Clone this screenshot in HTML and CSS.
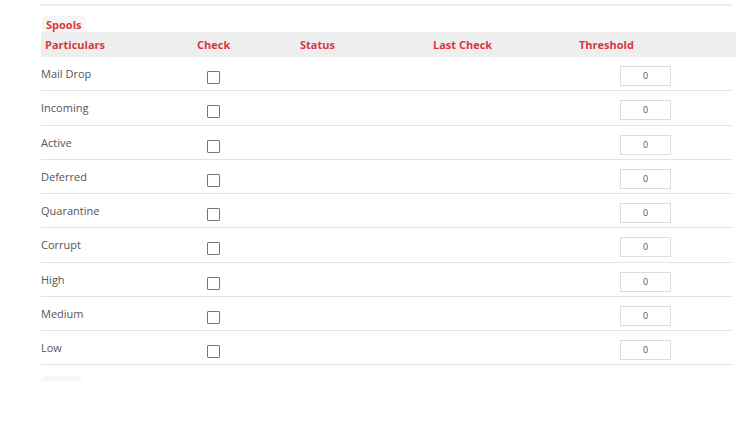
FILE: index.html
```html
<!DOCTYPE html>
<html>
<head>
<meta charset="utf-8">
<link rel="stylesheet" href="styles.css">
</head>
<body>
<div class="page">
  <div class="topline"></div>
  <div class="tab">Spools</div>
  <div class="head">
    <div class="hc">Particulars</div>
    <div class="hc">Check</div>
    <div class="hc">Status</div>
    <div class="hc">Last Check</div>
    <div class="hc">Threshold</div>
  </div>
  <div class="row"><div class="name">Mail Drop</div><div class="chk"><span class="box"></span></div><div></div><div></div><div class="thr"><span class="inp">0</span></div></div>
  <div class="row"><div class="name">Incoming</div><div class="chk"><span class="box"></span></div><div></div><div></div><div class="thr"><span class="inp">0</span></div></div>
  <div class="row"><div class="name">Active</div><div class="chk"><span class="box"></span></div><div></div><div></div><div class="thr"><span class="inp">0</span></div></div>
  <div class="row"><div class="name">Deferred</div><div class="chk"><span class="box"></span></div><div></div><div></div><div class="thr"><span class="inp">0</span></div></div>
  <div class="row"><div class="name">Quarantine</div><div class="chk"><span class="box"></span></div><div></div><div></div><div class="thr"><span class="inp">0</span></div></div>
  <div class="row"><div class="name">Corrupt</div><div class="chk"><span class="box"></span></div><div></div><div></div><div class="thr"><span class="inp">0</span></div></div>
  <div class="row"><div class="name">High</div><div class="chk"><span class="box"></span></div><div></div><div></div><div class="thr"><span class="inp">0</span></div></div>
  <div class="row"><div class="name">Medium</div><div class="chk"><span class="box"></span></div><div></div><div></div><div class="thr"><span class="inp">0</span></div></div>
  <div class="row"><div class="name">Low</div><div class="chk"><span class="box"></span></div><div></div><div></div><div class="thr"><span class="inp">0</span></div></div>
  <div class="ghost"></div>
</div>
</body>
</html>
```
FILE: styles.css
```css
html, body {
  margin: 0;
  padding: 0;
  background: #fff;
}
.page {
  padding: 4px 14px 0 41px;
  font-family: "Open Sans", "DejaVu Sans", sans-serif;
  font-size: 11px;
  color: #555;
}
.topline {
  height: 2px;
  background: #eeeeee;
  margin-right: 4px;
}
.tab {
  display: inline-block;
  margin-top: 10px;
  margin-left: 1px;
  height: 16px;
  line-height: 17px;
  padding: 0 4px 0 4px;
  width: 36px;
  background: #f6f6f6;
  border-radius: 4px 4px 0 0;
  color: #d9363e;
  font-weight: 700;
  vertical-align: top;
}
.head, .row {
  display: grid;
  grid-template-columns: 152px 103px 133px 146px 1fr;
}
.head {
  height: 25px;
  background: #eeeeee;
  align-items: center;
}
.hc {
  padding-left: 4px;
  color: #d9363e;
  font-weight: 700;
}
.row {
  height: 33.25px;
  border-bottom: 1px solid #e4e4e4;
  margin-right: 4px;
}
.name {
  padding-top: 9px;
  line-height: 15px;
}
.chk {
  padding: 14px 0 0 14px;
}
.box {
  display: block;
  width: 11px;
  height: 11px;
  border: 1px solid #777;
  border-radius: 1px;
  background: #fff;
}
.thr {
  padding: 9px 0 0 45px;
}
.inp {
  display: block;
  box-sizing: border-box;
  width: 51px;
  height: 20px;
  border: 1px solid #dcdcdc;
  text-align: center;
  line-height: 18px;
  font-size: 9px;
  color: #555;
}
.ghost {
  margin-top: 11px;
  width: 41px;
  height: 5px;
  background: #f7f7f7;
  border-radius: 5px 5px 0 0;
}
```
